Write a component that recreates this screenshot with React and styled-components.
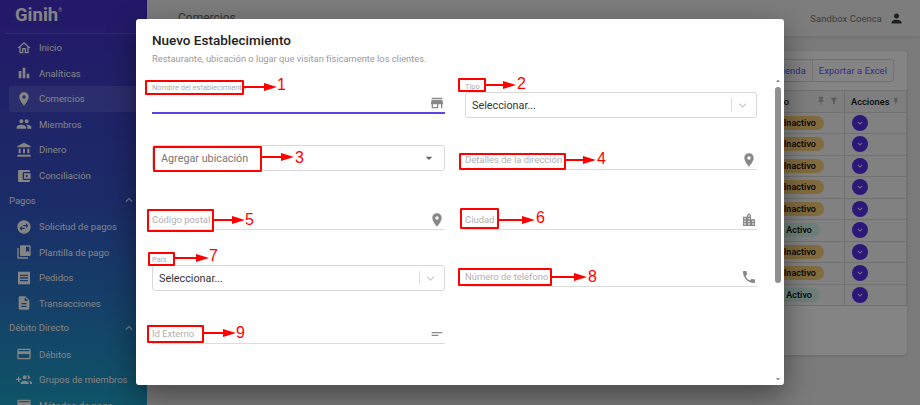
import React from 'react'
import styled, { createGlobalStyle } from 'styled-components'
import {
  MdOutlineHome, MdBarChart, MdPlace, MdPeople, MdAccountBalance, MdAccountBalanceWallet,
  MdSwapHorizontalCircle, MdCollectionsBookmark, MdReceipt, MdDescription, MdCreditCard,
  MdPayment, MdExpandLess, MdExpandMore, MdPerson, MdPushPin, MdFilterAlt,
  MdStore, MdLocationCity, MdLocalPhone, MdShortText, MdArrowDropDown, MdArrowDropUp,
  MdKeyboardArrowDown,
} from 'react-icons/md'

const GlobalStyle = createGlobalStyle`
  html, body { margin: 0; padding: 0; }
  body {
    width: 920px;
    height: 405px;
    overflow: hidden;
    font-family: Roboto, "Liberation Sans", sans-serif;
    background: #cdcdcd;
  }
  * { box-sizing: border-box; }
`

const Page = styled.div`
  position: relative;
  display: flex;
  width: 920px;
  height: 405px;
  overflow: hidden;
`

const Sidebar = styled.nav`
  flex: 0 0 147px;
  height: 405px;
  overflow: hidden;
  color: #ddd;
  background: linear-gradient(180deg, #3c28ae 0%, #2e4aae 50%, #1a8cae 100%);
`

const Logo = styled.div`
  height: 34px;
  margin-left: 5px;
  padding: 3px 0 0 10px;
  font-size: 18.5px;
  font-weight: 700;
  line-height: 24px;
  border-bottom: 1px solid rgba(255, 255, 255, 0.12);
  sup { font-size: 5px; font-weight: 400; vertical-align: 9px; line-height: 0; }
`

const NavList = styled.div`
  display: flex;
  flex-direction: column;
  padding-top: 1px;
`

const NavItem = styled.div`
  display: flex;
  align-items: center;
  gap: 7px;
  height: 25.55px;
  margin-left: 9px;
  padding-left: 7px;
  font-size: 9.5px;
  white-space: nowrap;
  background: ${p => (p.$active ? 'rgba(255,255,255,0.1)' : 'transparent')};
  border-radius: 3px 0 0 3px;
  svg { flex: 0 0 16px; font-size: 16px; }
`

const SectionHead = styled.div`
  display: flex;
  align-items: center;
  justify-content: space-between;
  height: 25.5px;
  margin-top: -1px;
  padding: 0 11px 0 9px;
  font-size: 9.5px;
  svg { font-size: 14px; }
`

const Main = styled.main`
  flex: 1;
  display: flex;
  flex-direction: column;
  min-width: 0;
`

const TopBar = styled.header`
  display: flex;
  align-items: center;
  justify-content: space-between;
  height: 36px;
  padding: 0 16px 0 31px;
  background: #d0d0d0;
  box-shadow: 0 1px 3px rgba(0, 0, 0, 0.1);
`

const PageTitle = styled.div`
  color: #555;
  font-size: 12px;
`

const UserBox = styled.div`
  display: flex;
  align-items: center;
  gap: 7px;
  color: #666;
  font-size: 9.4px;
  letter-spacing: 0.1px;
  svg { font-size: 15px; color: #333; }
`

const Card = styled.section`
  width: 747px;
  height: 304px;
  margin: 15px 0 0 13px;
  padding: 8px 0 0 0;
  background: #dcdcdc;
  border-radius: 4px;
  box-shadow: 0 1px 3px rgba(0, 0, 0, 0.15);
`

const Actions = styled.div`
  display: flex;
  justify-content: flex-end;
  padding-right: 13px;
`

const ActionButton = styled.div`
  height: 23px;
  padding: 0 6px;
  border: 1px solid #bcbcbc;
  margin-left: -1px;
  color: #5a48e0;
  font-size: 9.3px;
  letter-spacing: 0.1px;
  line-height: 21px;
  border-radius: ${p => (p.$last ? '0 3px 3px 0' : '3px 0 0 3px')};
`

const Table = styled.div`
  margin-top: 8px;
  border: 1px solid #bcbcbc;
  border-width: 1px 1px 0 0;
`

const Row = styled.div`
  display: grid;
  grid-template-columns: 1fr 62px;
  height: 21.5px;
  border-bottom: 1px solid #bcbcbc;
  background: ${p => (p.$head ? '#d2d2d2' : '#d8d8d8')};
`

const Cell = styled.div`
  display: flex;
  align-items: center;
  justify-content: ${p => p.$justify || 'flex-start'};
  gap: 3px;
  padding: 0 ${p => p.$right ?? 6}px 0 6px;
  color: #111;
  font-size: 9.3px;
  font-weight: 500;
  border-left: ${p => (p.$line ? '1px solid #bcbcbc' : 'none')};
  svg { color: #999; font-size: 10px; }
`

const HeadText = styled.span`
  margin-right: 24px;
`

const Pill = styled.span`
  display: inline-flex;
  align-items: center;
  justify-content: flex-end;
  height: 14px;
  padding: 0 8px 0 14px;
  margin-right: ${p => (p.$on ? 4 : 0)}px;
  border-radius: 7px;
  font-size: 8.9px;
  font-weight: 500;
  letter-spacing: 0.1px;
  color: #000;
  background: ${p => (p.$on ? '#b6d4ca' : '#d9b368')};
`

const RoundButton = styled.span`
  display: flex;
  align-items: center;
  justify-content: center;
  width: 16px;
  height: 16px;
  margin-left: 1px;
  border-radius: 50%;
  background: #4a28c8;
  svg { color: #ccc; font-size: 10px; }
`

const Overlay = styled.div`
  position: absolute;
  inset: 0;
  background: rgba(0, 0, 0, 0.4);
`

const Dialog = styled.div`
  position: absolute;
  left: 136px;
  top: 19px;
  display: flex;
  flex-direction: column;
  width: 648px;
  height: 366px;
  background: #fff;
  border-radius: 3px;
  box-shadow: 0 10px 30px rgba(0, 0, 0, 0.45);
`

const DialogHead = styled.div`
  padding: 13px 16px 0;
  height: 56px;
`

const DialogTitle = styled.h2`
  margin: 0;
  color: #222;
  font-size: 13.5px;
  font-weight: 500;
  line-height: 16px;
`

const DialogSub = styled.p`
  margin: 4px 0 0;
  color: #9a9a9a;
  font-size: 9.3px;
  line-height: 13px;
`

const DialogBody = styled.div`
  flex: 1;
  display: flex;
  min-height: 0;
`

const FormGrid = styled.div`
  flex: 1;
  display: grid;
  grid-template-columns: 293px 292px;
  column-gap: 20px;
  align-items: start;
  padding-left: 16px;
`

const Column = styled.div`
  display: flex;
  flex-direction: column;
`

const Field = styled.div`
  margin-top: ${p => p.$top}px;
`

const TinyLabel = styled.div`
  color: #aaa;
  font-size: 7.5px;
  line-height: 10px;
  white-space: nowrap;
`

const UnderlineInput = styled.div`
  display: flex;
  align-items: center;
  justify-content: space-between;
  height: ${p => p.$height || 20}px;
  border-bottom: ${p => (p.$focus ? '2px solid #5b45e0' : '1px solid #ddd')};
  color: #b0b0b0;
  font-size: 9.45px;
  svg { color: #888; font-size: 16px; }
`

const SelectBox = styled.div`
  display: flex;
  align-items: center;
  height: 26px;
  margin-top: ${p => p.$gap || 0}px;
  padding: 0 6px;
  border: 1px solid #d8d8d8;
  border-radius: 3px;
  color: #333;
  font-size: 10.8px;
`

const SelectText = styled.span`
  flex: 1;
`

const SelectDivider = styled.span`
  width: 1px;
  height: 14px;
  margin-right: 3px;
  background: #ddd;
`

const SelectChevron = styled(MdKeyboardArrowDown)`
  color: #ccc;
  font-size: 15px;
`

const MenuSelect = styled(SelectBox)`
  justify-content: space-between;
  padding: 0 7px 0 8px;
  color: #777;
  svg { color: #666; font-size: 16px; }
`

const ScrollTrack = styled.div`
  display: flex;
  flex-direction: column;
  align-items: center;
  flex: 0 0 10px;
  margin-right: 1px;
  padding: 2px 0;
  svg { flex: 0 0 10px; font-size: 12px; color: #777; margin: -1px; }
`

const ScrollThumb = styled.div`
  flex: 0 0 196px;
  width: 6px;
  margin: 2px 0 auto;
  border-radius: 3px;
  background: #8f8f8f;
`

const Callout = styled.div`
  position: absolute;
  left: ${p => p.$x}px;
  top: ${p => p.$y}px;
  width: ${p => p.$w}px;
  height: ${p => p.$h}px;
  border: 2px solid #f00;
  border-radius: 1px;
`

const ArrowMark = styled.svg`
  position: absolute;
  left: ${p => p.$x}px;
  top: ${p => p.$y - 4}px;
  overflow: visible;
`

const CalloutNumber = styled.span`
  position: absolute;
  left: ${p => p.$x}px;
  top: ${p => p.$y - 9}px;
  color: #f00;
  font-family: "Liberation Sans", Arial, sans-serif;
  font-size: 16px;
  line-height: 18px;
`

// material group_add, plus sign on the left
const GroupAddIcon = () => (
  <svg width="1em" height="1em" viewBox="0 0 24 24" fill="currentColor">
    <path d="M8 10H5V7H3v3H0v2h3v3h2v-3h3v-2zm10 1c1.66 0 2.99-1.34 2.99-3S19.66 5 18 5c-.32 0-.63.05-.91.14.57.81.9 1.79.9 2.86s-.34 2.04-.9 2.86c.28.09.59.14.91.14zm-5 0c1.66 0 2.99-1.34 2.99-3S14.66 5 13 5s-3 1.34-3 3 1.34 3 3 3zm6.62 2.16c.83.73 1.38 1.66 1.38 2.84v2h3v-2c0-1.54-2.37-2.49-4.38-2.84zM13 13c-2 0-6 1-6 3v2h12v-2c0-2-4-3-6-3z" />
  </svg>
)

const mainNav = [
  [MdOutlineHome, 'Inicio'],
  [MdBarChart, 'Analíticas'],
  [MdPlace, 'Comercios', true],
  [MdPeople, 'Miembros'],
  [MdAccountBalance, 'Dinero'],
  [MdAccountBalanceWallet, 'Conciliación'],
]

const payNav = [
  [MdSwapHorizontalCircle, 'Solicitud de pagos'],
  [MdCollectionsBookmark, 'Plantilla de pago'],
  [MdReceipt, 'Pedidos'],
  [MdDescription, 'Transacciones'],
]

const debitNav = [
  [MdCreditCard, 'Débitos'],
  [GroupAddIcon, 'Grupos de miembros'],
  [MdPayment, 'Métodos de pago'],
]

const statuses = [false, false, false, false, false, true, false, false, true]

// red box (x, y, w, h), arrow start, length and mid y, then the number's place
const callouts = [
  { n: 1, box: [145, 80, 99, 15], ax: 244, al: 33, ay: 87, nx: 277, ny: 85 },
  { n: 2, box: [458, 78, 28, 14], ax: 486, al: 30, ay: 85, nx: 517, ny: 84 },
  { n: 3, box: [153, 146, 109, 26], ax: 262, al: 32, ay: 157, nx: 295, ny: 158 },
  { n: 4, box: [459, 153, 107, 17], ax: 566, al: 30, ay: 160, nx: 597, ny: 159 },
  { n: 5, box: [147, 209, 67, 23], ax: 214, al: 31, ay: 220, nx: 245, ny: 220 },
  { n: 6, box: [460, 208, 39, 21], ax: 499, al: 36, ay: 220, nx: 536, ny: 218 },
  { n: 7, box: [148, 252, 27, 14], ax: 175, al: 34, ay: 258, nx: 209, ny: 256 },
  { n: 8, box: [458, 268, 94, 18], ax: 552, al: 35, ay: 277, nx: 588, ny: 277 },
  { n: 9, box: [147, 325, 57, 18], ax: 204, al: 32, ay: 333, nx: 236, ny: 333 },
]

const NavGroup = ({ items }) => (
  <NavList>
    {items.map(([Icon, label, active]) => (
      <NavItem key={label} $active={active}>
        <Icon />
        {label}
      </NavItem>
    ))}
  </NavList>
)

const InputField = ({ top, text, icon: Icon }) => (
  <Field $top={top}>
    <UnderlineInput>
      {text}
      <Icon />
    </UnderlineInput>
  </Field>
)

const LabelSelect = ({ top, gap, label }) => (
  <Field $top={top}>
    <TinyLabel>{label}</TinyLabel>
    <SelectBox $gap={gap}>
      <SelectText>Seleccionar...</SelectText>
      <SelectDivider />
      <SelectChevron />
    </SelectBox>
  </Field>
)

const App = () => (
  <Page>
    <GlobalStyle />
    <Sidebar>
      <Logo>Ginih<sup>®</sup></Logo>
      <NavGroup items={mainNav} />
      <SectionHead>Pagos <MdExpandLess /></SectionHead>
      <NavGroup items={payNav} />
      <SectionHead>Débito Directo <MdExpandLess /></SectionHead>
      <NavGroup items={debitNav} />
    </Sidebar>
    <Main>
      <TopBar>
        <PageTitle>Comercios</PageTitle>
        <UserBox>Sandbox Coenca <MdPerson /></UserBox>
      </TopBar>
      <Card>
        <Actions>
          <ActionButton>Crear Tienda</ActionButton>
          <ActionButton $last>Exportar a Excel</ActionButton>
        </Actions>
        <Table>
          <Row $head>
            <Cell $justify="flex-end" $right={5}><HeadText>Estado</HeadText> <MdPushPin /> <MdFilterAlt /></Cell>
            <Cell $line $justify="space-between">Acciones <MdPushPin /></Cell>
          </Row>
          {statuses.map((on, i) => (
            <Row key={i}>
              <Cell $justify="flex-end" $right={20}>
                <Pill $on={on}>{on ? 'Activo' : 'Inactivo'}</Pill>
              </Cell>
              <Cell $line>
                <RoundButton><MdExpandMore /></RoundButton>
              </Cell>
            </Row>
          ))}
        </Table>
      </Card>
    </Main>
    <Overlay />
    <Dialog>
      <DialogHead>
        <DialogTitle>Nuevo Establecimiento</DialogTitle>
        <DialogSub>Restaurante, ubicación o lugar que visitan físicamente los clientes.</DialogSub>
      </DialogHead>
      <DialogBody>
        <FormGrid>
          <Column>
            <Field $top={8}>
              <TinyLabel>Nombre del establecimiento</TinyLabel>
              <UnderlineInput $focus $height={21}><span /><MdStore /></UnderlineInput>
            </Field>
            <Field $top={31}>
              <MenuSelect>Agregar ubicación <MdArrowDropDown /></MenuSelect>
            </Field>
            <InputField top={39} text="Código postal" icon={MdPlace} />
            <LabelSelect top={25} gap={0} label="País" />
            <InputField top={33} text="Id Externo" icon={MdShortText} />
          </Column>
          <Column>
            <LabelSelect top={7} gap={0} label="Tipo" />
            <InputField top={32} text="Detalles de la dirección" icon={MdPlace} />
            <InputField top={40} text="Ciudad" icon={MdLocationCity} />
            <InputField top={37} text="Número de teléfono" icon={MdLocalPhone} />
          </Column>
        </FormGrid>
        <ScrollTrack>
          <MdArrowDropUp />
          <ScrollThumb />
          <MdArrowDropDown />
        </ScrollTrack>
      </DialogBody>
    </Dialog>
    {callouts.map(({ n, box, ax, al, ay, nx, ny }) => (
      <React.Fragment key={n}>
        <Callout $x={box[0]} $y={box[1]} $w={box[2]} $h={box[3]} />
        <ArrowMark $x={ax} $y={ay} width={al} height="8" viewBox={`0 0 ${al} 8`}>
          <path d={`M0 4H${al - 12}`} stroke="#f00" strokeWidth="2" />
          <path d={`M${al - 13} 0L${al} 4L${al - 13} 8Z`} fill="#f00" />
        </ArrowMark>
        <CalloutNumber $x={nx} $y={ny}>{n}</CalloutNumber>
      </React.Fragment>
    ))}
  </Page>
)

export default App
